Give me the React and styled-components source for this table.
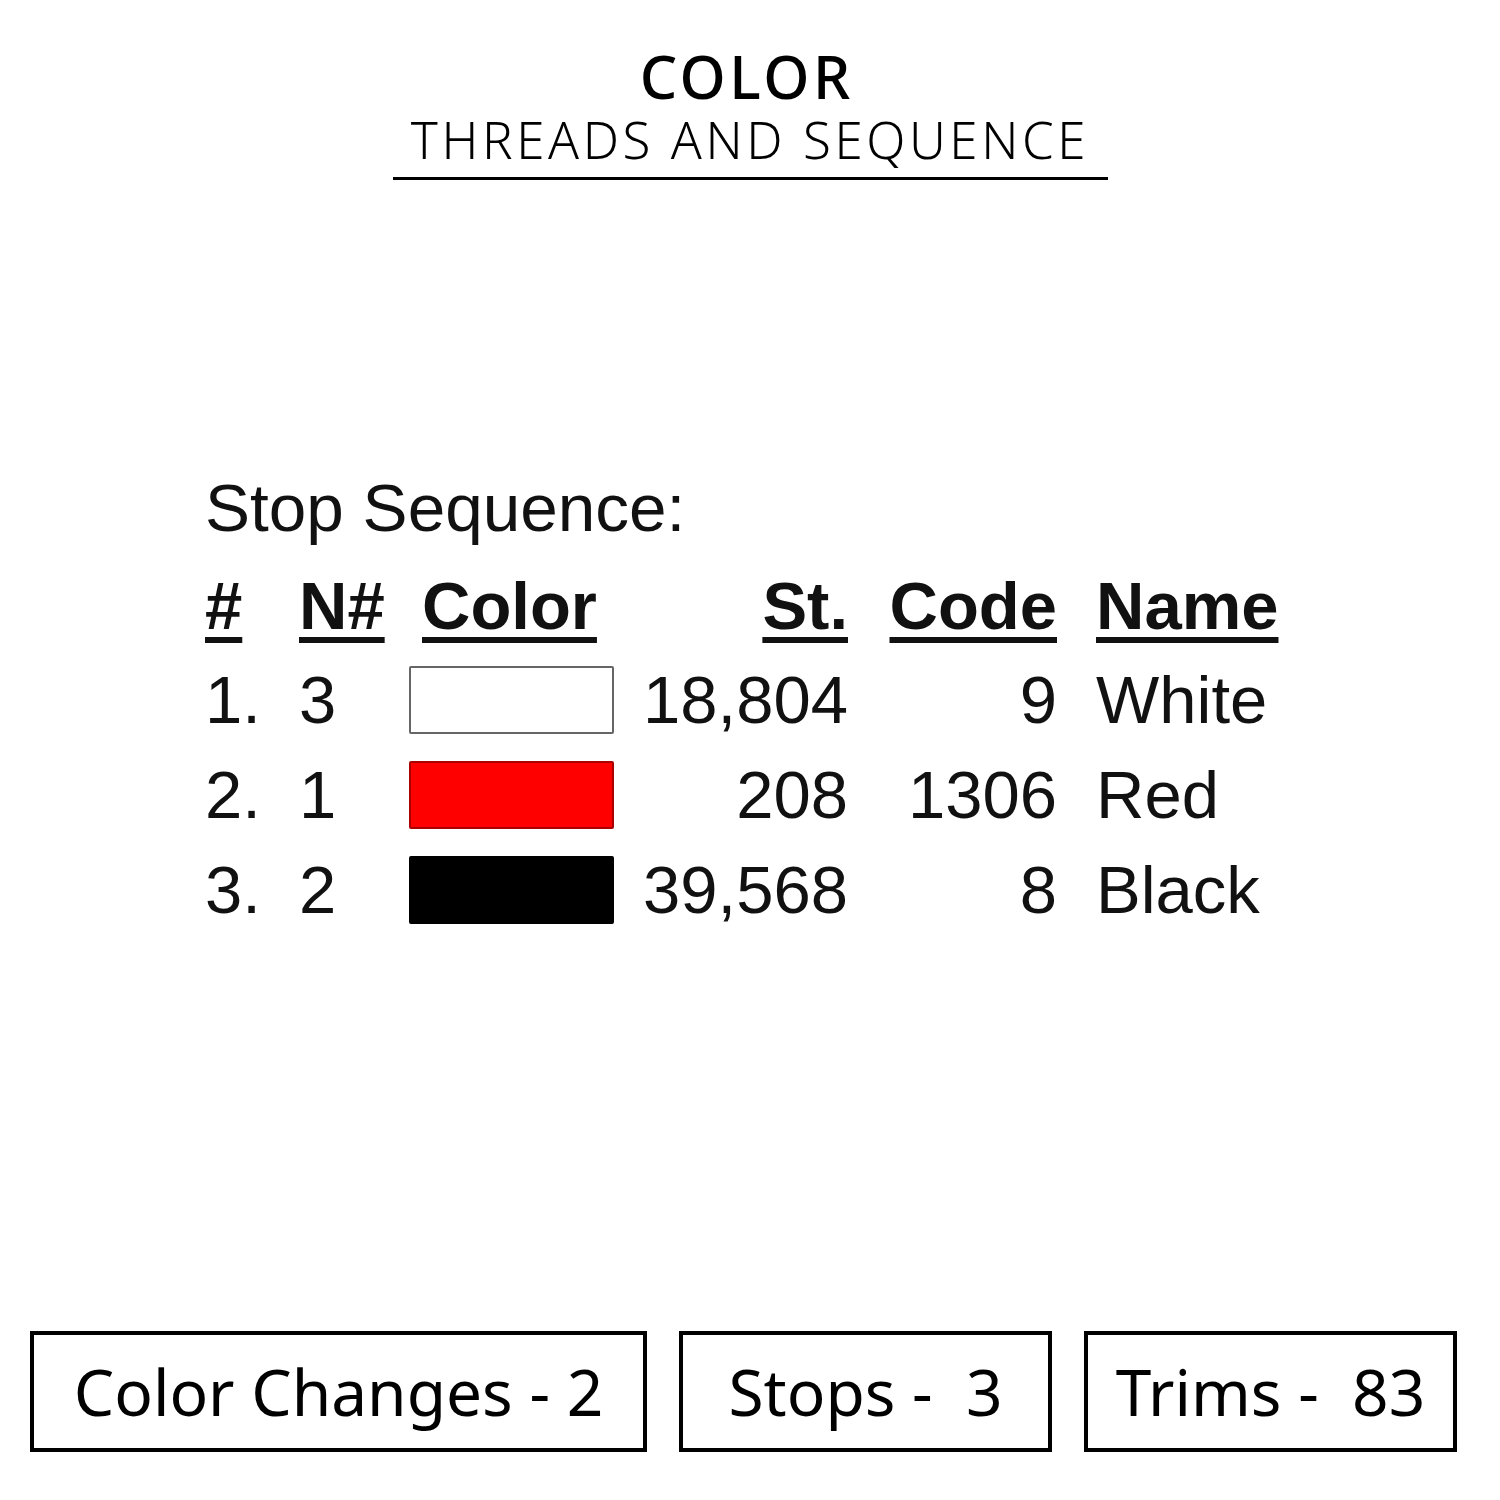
import React from "react";
import styled, { createGlobalStyle } from "styled-components";

const Global = createGlobalStyle`
  html, body { margin: 0; padding: 0; background: #fff; }
  body { width: 1500px; height: 1500px; overflow: hidden; }
`;

const Page = styled.div`
  width: 1500px;
  height: 1500px;
  display: flex;
  flex-direction: column;
  align-items: stretch;
  color: #000;
  box-sizing: border-box;
`;

const Header = styled.header`
  display: flex;
  flex-direction: column;
  align-items: center;
  padding-top: 46px;
`;

const Title = styled.h1`
  margin: 0;
  font-family: "Noto Sans", "DejaVu Sans", sans-serif;
  font-weight: 500;
  font-size: 59px;
  line-height: 60px;
  letter-spacing: 3.5px;
  padding-left: 3.5px;
  margin-right: 10px;
`;

const Subtitle = styled.h2`
  margin: 0;
  font-family: "Noto Sans", "DejaVu Sans", sans-serif;
  font-weight: 350;
  font-size: 51px;
  line-height: 58px;
  letter-spacing: 3.6px;
  width: 715px;
  text-align: center;
  border-bottom: 3px solid #000;
  padding-bottom: 9px;
  padding-top: 4px;
`;

const Sequence = styled.section`
  margin-top: 280px;
  padding-left: 205px;
  font-family: "Liberation Sans", Arial, sans-serif;
  font-size: 67px;
  color: #111;
`;

const Caption = styled.div`
  font-size: 67.5px;
  line-height: 95px;
  height: 100px;
`;

const Grid = styled.div`
  display: grid;
  grid-template-columns: 94px 110px 205px 234px 209px auto;
  grid-template-rows: 92px repeat(3, 95px);
  align-items: center;
  line-height: 95px;
`;

const Head = styled.div`
  font-weight: 700;
  text-decoration: underline;
  text-decoration-thickness: 6px;
  text-underline-offset: 8px;
  text-align: ${(p) => p.$align || "left"};
  padding-left: ${(p) => p.$pl || 0}px;
  line-height: 92px;
`;

const Cell = styled.div`
  text-align: ${(p) => p.$align || "left"};
  padding-left: ${(p) => p.$pl || 0}px;
  white-space: nowrap;
`;

const Swatch = styled.div`
  width: 205px;
  height: 68px;
  box-sizing: border-box;
  background: ${(p) => p.$fill};
  border: 2px solid ${(p) => p.$edge};
  border-radius: 2px;
`;

const Footer = styled.footer`
  margin-top: auto;
  margin-bottom: 48px;
  display: flex;
  padding-left: 30px;
  gap: 32px;
`;

const StatBox = styled.div`
  width: ${(p) => p.$w}px;
  height: 121px;
  box-sizing: border-box;
  border: 4px solid #000;
  display: flex;
  align-items: center;
  justify-content: center;
  font-family: "Noto Sans", "DejaVu Sans", sans-serif;
  font-size: 64px;
  white-space: pre;
  color: #000;
`;

const rows = [
  { n: "1.", nn: "3", fill: "#fff", edge: "#666", st: "18,804", code: "9", name: "White" },
  { n: "2.", nn: "1", fill: "#ff0000", edge: "#a00", st: "208", code: "1306", name: "Red" },
  { n: "3.", nn: "2", fill: "#000", edge: "#000", st: "39,568", code: "8", name: "Black" },
];

export default function App() {
  return (
    <Page>
      <Global />
      <Header>
        <Title>COLOR</Title>
        <Subtitle>THREADS AND SEQUENCE</Subtitle>
      </Header>
      <Sequence>
        <Caption>Stop Sequence:</Caption>
        <Grid>
          <Head>#</Head>
          <Head>N#</Head>
          <Head $pl={13}>Color</Head>
          <Head $align="right">St.</Head>
          <Head $align="right">Code</Head>
          <Head $pl={39}>Name</Head>
          {rows.map((r) => (
            <React.Fragment key={r.n}>
              <Cell>{r.n}</Cell>
              <Cell>{r.nn}</Cell>
              <Swatch $fill={r.fill} $edge={r.edge} />
              <Cell $align="right">{r.st}</Cell>
              <Cell $align="right">{r.code}</Cell>
              <Cell $pl={39}>{r.name}</Cell>
            </React.Fragment>
          ))}
        </Grid>
      </Sequence>
      <Footer>
        <StatBox $w={617}>Color Changes - 2</StatBox>
        <StatBox $w={373}>Stops -  3</StatBox>
        <StatBox $w={373}>Trims -  83</StatBox>
      </Footer>
    </Page>
  );
}
